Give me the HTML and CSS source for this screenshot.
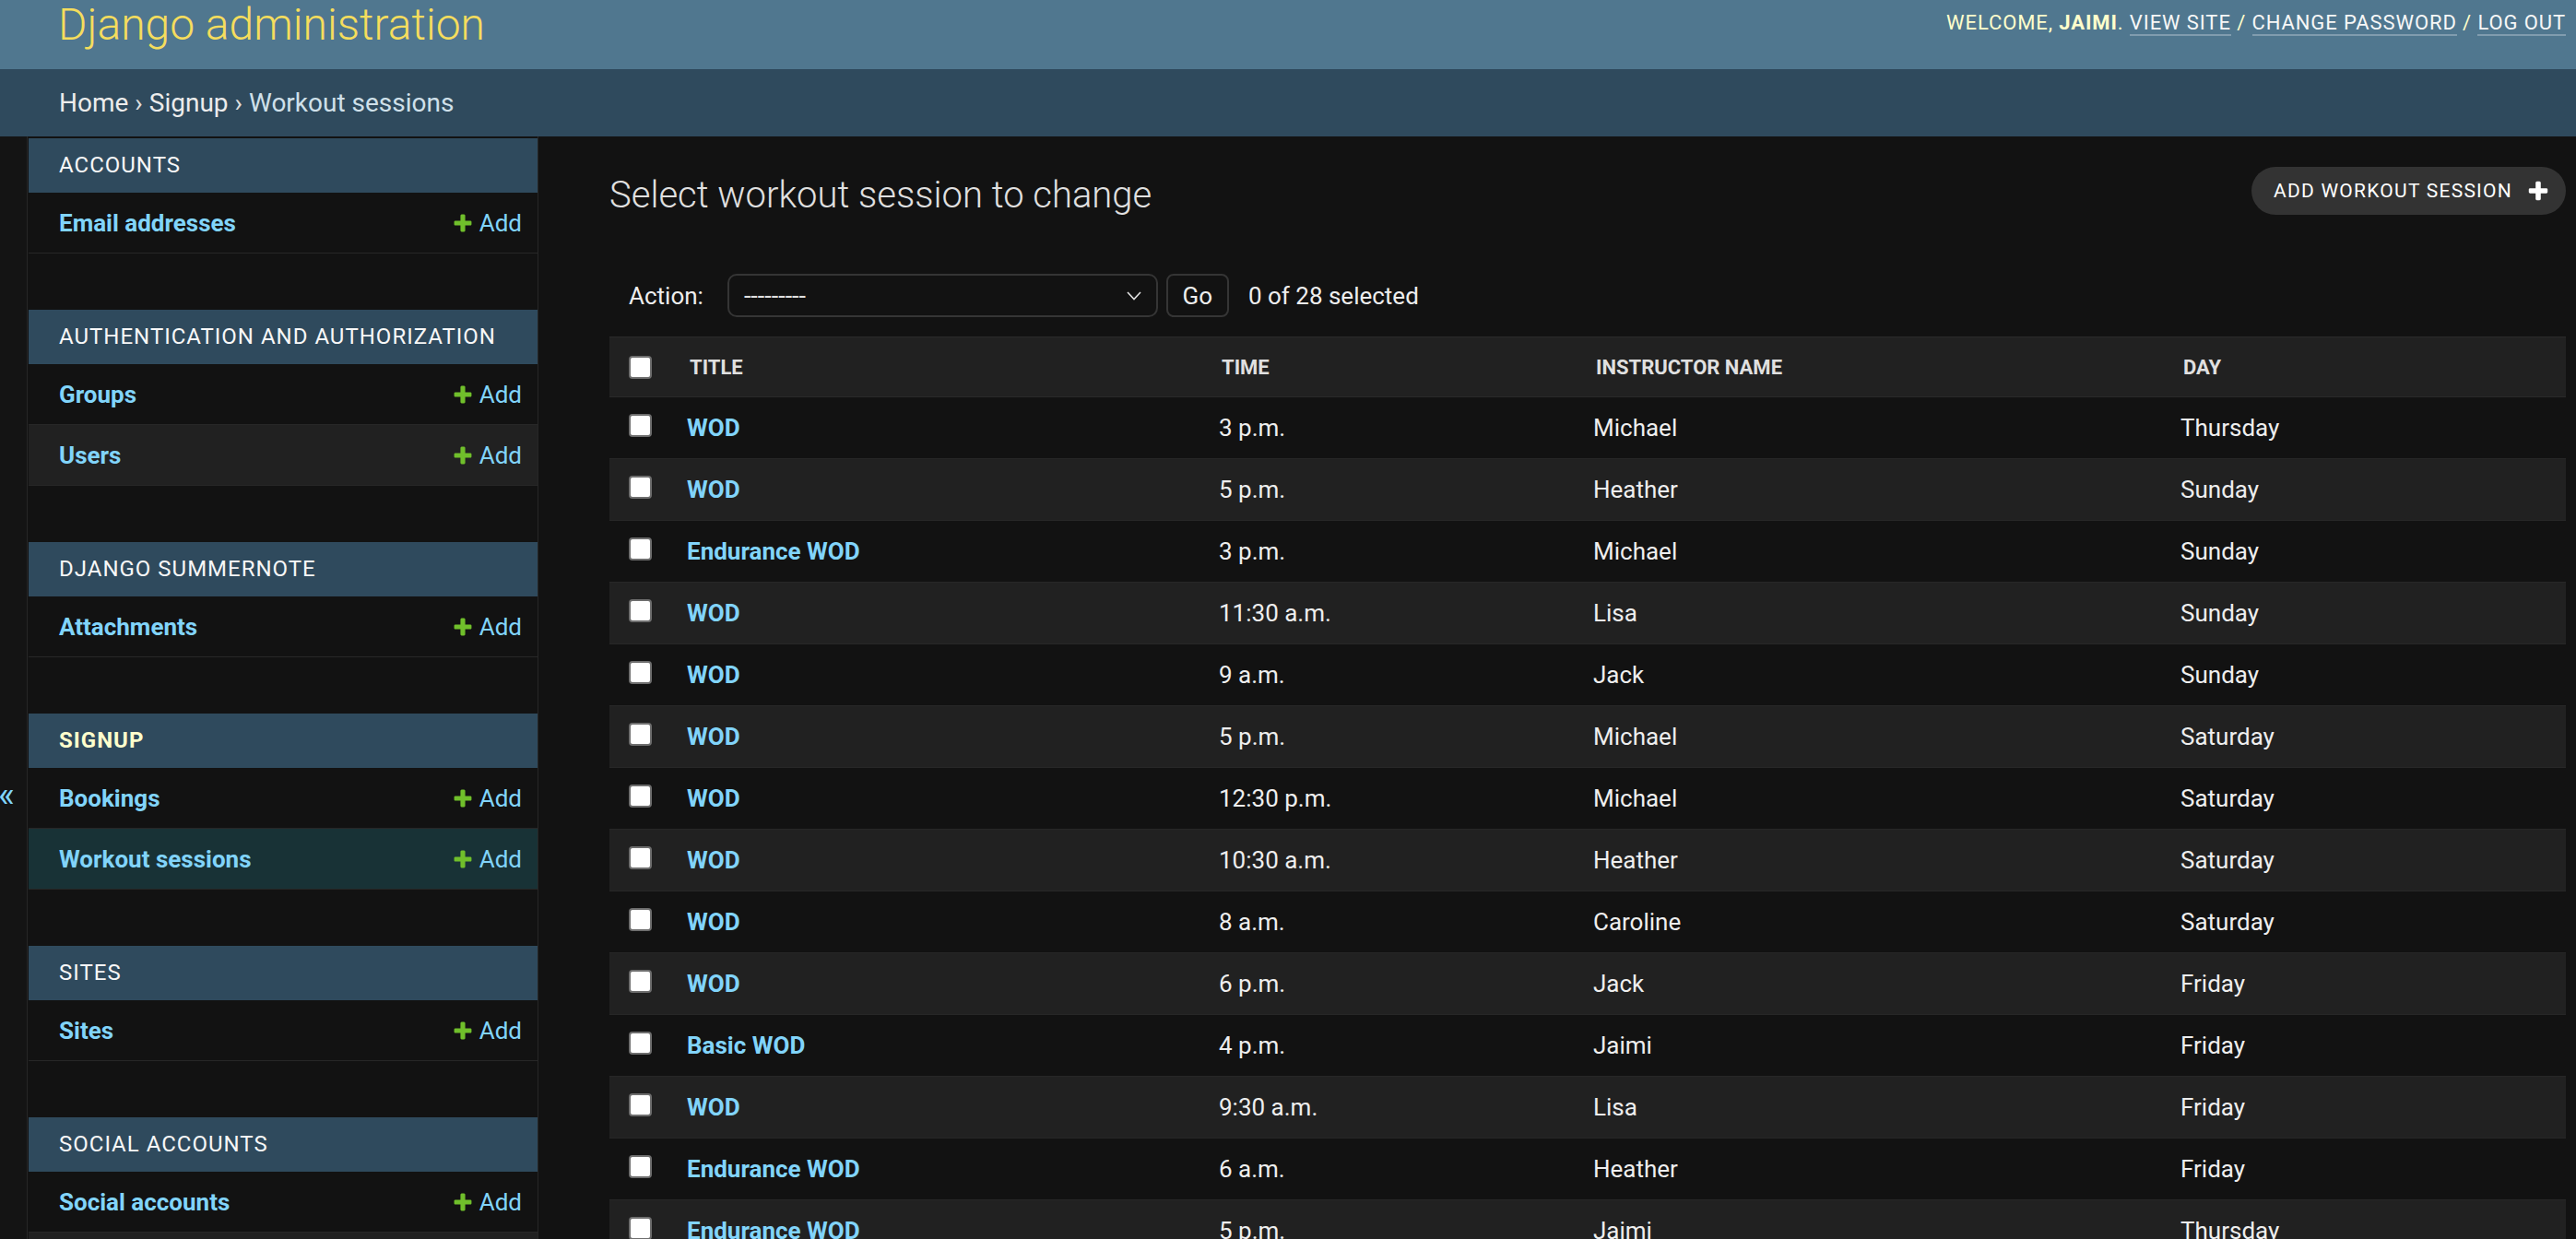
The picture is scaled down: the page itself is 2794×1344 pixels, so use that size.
FILE: index.html
```html
<!DOCTYPE html>
<html lang="en">
<head>
<meta charset="utf-8">
<title>Select workout session to change | Django site admin</title>
<link rel="stylesheet" href="styles.css">
</head>
<body>
<header class="header">
  <h1 class="branding">Django administration</h1>
  <div class="user-tools">Welcome, <strong>Jaimi</strong>. <a href="#">View site</a> / <a href="#">Change password</a> / <a href="#">Log out</a></div>
</header>
<nav class="breadcrumbs"><a href="#">Home</a><span class="sep">›</span><a href="#">Signup</a><span class="sep">›</span>Workout sessions</nav>
<div class="main">
  <div class="toggle"><span class="toggle-glyph">«</span></div>
  <aside class="sidebar">
    <section class="module">
      <div class="caption">Accounts</div>
      <div class="row"><a class="model" href="#">Email addresses</a><a class="addlink" href="#"><svg viewBox="0 0 1792 1792" width="24" height="24"><path fill="#70bf2b" d="M1600 796v192q0 40-28 68t-68 28h-416v416q0 40-28 68t-68 28h-192q-40 0-68-28t-28-68v-416h-416q-40 0-68-28t-28-68v-192q0-40 28-68t68-28h416v-416q0-40 28-68t68-28h192q40 0 68 28t28 68v416h416q40 0 68 28t28 68z"/></svg>Add</a></div>
    </section>
    <section class="module">
      <div class="caption">Authentication and Authorization</div>
      <div class="row"><a class="model" href="#">Groups</a><a class="addlink" href="#"><svg viewBox="0 0 1792 1792" width="24" height="24"><path fill="#70bf2b" d="M1600 796v192q0 40-28 68t-68 28h-416v416q0 40-28 68t-68 28h-192q-40 0-68-28t-28-68v-416h-416q-40 0-68-28t-28-68v-192q0-40 28-68t68-28h416v-416q0-40 28-68t68-28h192q40 0 68 28t28 68v416h416q40 0 68 28t28 68z"/></svg>Add</a></div>
      <div class="row alt"><a class="model" href="#">Users</a><a class="addlink" href="#"><svg viewBox="0 0 1792 1792" width="24" height="24"><path fill="#70bf2b" d="M1600 796v192q0 40-28 68t-68 28h-416v416q0 40-28 68t-68 28h-192q-40 0-68-28t-28-68v-416h-416q-40 0-68-28t-28-68v-192q0-40 28-68t68-28h416v-416q0-40 28-68t68-28h192q40 0 68 28t28 68v416h416q40 0 68 28t28 68z"/></svg>Add</a></div>
    </section>
    <section class="module">
      <div class="caption">Django Summernote</div>
      <div class="row"><a class="model" href="#">Attachments</a><a class="addlink" href="#"><svg viewBox="0 0 1792 1792" width="24" height="24"><path fill="#70bf2b" d="M1600 796v192q0 40-28 68t-68 28h-416v416q0 40-28 68t-68 28h-192q-40 0-68-28t-28-68v-416h-416q-40 0-68-28t-28-68v-192q0-40 28-68t68-28h416v-416q0-40 28-68t68-28h192q40 0 68 28t28 68v416h416q40 0 68 28t28 68z"/></svg>Add</a></div>
    </section>
    <section class="module">
      <div class="caption current">Signup</div>
      <div class="row"><a class="model" href="#">Bookings</a><a class="addlink" href="#"><svg viewBox="0 0 1792 1792" width="24" height="24"><path fill="#70bf2b" d="M1600 796v192q0 40-28 68t-68 28h-416v416q0 40-28 68t-68 28h-192q-40 0-68-28t-28-68v-416h-416q-40 0-68-28t-28-68v-192q0-40 28-68t68-28h416v-416q0-40 28-68t68-28h192q40 0 68 28t28 68v416h416q40 0 68 28t28 68z"/></svg>Add</a></div>
      <div class="row selected"><a class="model" href="#">Workout sessions</a><a class="addlink" href="#"><svg viewBox="0 0 1792 1792" width="24" height="24"><path fill="#70bf2b" d="M1600 796v192q0 40-28 68t-68 28h-416v416q0 40-28 68t-68 28h-192q-40 0-68-28t-28-68v-416h-416q-40 0-68-28t-28-68v-192q0-40 28-68t68-28h416v-416q0-40 28-68t68-28h192q40 0 68 28t28 68v416h416q40 0 68 28t28 68z"/></svg>Add</a></div>
    </section>
    <section class="module">
      <div class="caption">Sites</div>
      <div class="row"><a class="model" href="#">Sites</a><a class="addlink" href="#"><svg viewBox="0 0 1792 1792" width="24" height="24"><path fill="#70bf2b" d="M1600 796v192q0 40-28 68t-68 28h-416v416q0 40-28 68t-68 28h-192q-40 0-68-28t-28-68v-416h-416q-40 0-68-28t-28-68v-192q0-40 28-68t68-28h416v-416q0-40 28-68t68-28h192q40 0 68 28t28 68v416h416q40 0 68 28t28 68z"/></svg>Add</a></div>
    </section>
    <section class="module">
      <div class="caption">Social Accounts</div>
      <div class="row"><a class="model" href="#">Social accounts</a><a class="addlink" href="#"><svg viewBox="0 0 1792 1792" width="24" height="24"><path fill="#70bf2b" d="M1600 796v192q0 40-28 68t-68 28h-416v416q0 40-28 68t-68 28h-192q-40 0-68-28t-28-68v-416h-416q-40 0-68-28t-28-68v-192q0-40 28-68t68-28h416v-416q0-40 28-68t68-28h192q40 0 68 28t28 68v416h416q40 0 68 28t28 68z"/></svg>Add</a></div>
      <div class="row alt"><a class="model" href="#">Social application tokens</a><a class="addlink" href="#"><svg viewBox="0 0 1792 1792" width="24" height="24"><path fill="#70bf2b" d="M1600 796v192q0 40-28 68t-68 28h-416v416q0 40-28 68t-68 28h-192q-40 0-68-28t-28-68v-416h-416q-40 0-68-28t-28-68v-192q0-40 28-68t68-28h416v-416q0-40 28-68t68-28h192q40 0 68 28t28 68v416h416q40 0 68 28t28 68z"/></svg>Add</a></div>
    </section>
  </aside>
  <main class="content">
    <div class="content-head">
      <h1 class="title">Select workout session to change</h1>
      <a class="addbtn" href="#">Add workout session<svg viewBox="0 0 1792 1792" width="26" height="26"><path fill="#ffffff" d="M1600 796v192q0 40-28 68t-68 28h-416v416q0 40-28 68t-68 28h-192q-40 0-68-28t-28-68v-416h-416q-40 0-68-28t-28-68v-192q0-40 28-68t68-28h416v-416q0-40 28-68t68-28h192q40 0 68 28t28 68v416h416q40 0 68 28t28 68z"/></svg></a>
    </div>
    <div class="actions">
      <span class="action-label">Action:</span>
      <div class="select"><span>---------</span><svg width="16" height="10" viewBox="0 0 16 10"><polyline points="1,1 8,8.5 15,1" fill="none" stroke="#e0e0e0" stroke-width="1.6"/></svg></div>
      <div class="go">Go</div>
      <span class="counter">0 of 28 selected</span>
    </div>
    <table class="results">
      <colgroup><col class="c-check"><col class="c-title"><col class="c-time"><col class="c-inst"><col class="c-day"></colgroup>
      <thead>
        <tr><th class="check"><span class="cb"></span></th><th>Title</th><th>Time</th><th>Instructor name</th><th>Day</th></tr>
      </thead>
      <tbody>
        <tr><td class="check"><span class="cb"></span></td><td><a href="#">WOD</a></td><td>3 p.m.</td><td>Michael</td><td>Thursday</td></tr>
        <tr><td class="check"><span class="cb"></span></td><td><a href="#">WOD</a></td><td>5 p.m.</td><td>Heather</td><td>Sunday</td></tr>
        <tr><td class="check"><span class="cb"></span></td><td><a href="#">Endurance WOD</a></td><td>3 p.m.</td><td>Michael</td><td>Sunday</td></tr>
        <tr><td class="check"><span class="cb"></span></td><td><a href="#">WOD</a></td><td>11:30 a.m.</td><td>Lisa</td><td>Sunday</td></tr>
        <tr><td class="check"><span class="cb"></span></td><td><a href="#">WOD</a></td><td>9 a.m.</td><td>Jack</td><td>Sunday</td></tr>
        <tr><td class="check"><span class="cb"></span></td><td><a href="#">WOD</a></td><td>5 p.m.</td><td>Michael</td><td>Saturday</td></tr>
        <tr><td class="check"><span class="cb"></span></td><td><a href="#">WOD</a></td><td>12:30 p.m.</td><td>Michael</td><td>Saturday</td></tr>
        <tr><td class="check"><span class="cb"></span></td><td><a href="#">WOD</a></td><td>10:30 a.m.</td><td>Heather</td><td>Saturday</td></tr>
        <tr><td class="check"><span class="cb"></span></td><td><a href="#">WOD</a></td><td>8 a.m.</td><td>Caroline</td><td>Saturday</td></tr>
        <tr><td class="check"><span class="cb"></span></td><td><a href="#">WOD</a></td><td>6 p.m.</td><td>Jack</td><td>Friday</td></tr>
        <tr><td class="check"><span class="cb"></span></td><td><a href="#">Basic WOD</a></td><td>4 p.m.</td><td>Jaimi</td><td>Friday</td></tr>
        <tr><td class="check"><span class="cb"></span></td><td><a href="#">WOD</a></td><td>9:30 a.m.</td><td>Lisa</td><td>Friday</td></tr>
        <tr><td class="check"><span class="cb"></span></td><td><a href="#">Endurance WOD</a></td><td>6 a.m.</td><td>Heather</td><td>Friday</td></tr>
        <tr><td class="check"><span class="cb"></span></td><td><a href="#">Endurance WOD</a></td><td>5 p.m.</td><td>Jaimi</td><td>Thursday</td></tr>
        <tr><td class="check"><span class="cb"></span></td><td><a href="#">WOD</a></td><td>7 a.m.</td><td>Lisa</td><td>Thursday</td></tr>
      </tbody>
    </table>
  </main>
</div>
</body>
</html>
```
FILE: styles.css
```css
* { box-sizing: border-box; }
html, body { margin: 0; }
body {
  background: #121212;
  color: #eeeeee;
  font-family: Roboto, "Liberation Sans", Arial, sans-serif;
}
a { text-decoration: none; color: #81d4fa; }

.header {
  height: 75px;
  background: #50778f;
  display: flex;
  justify-content: space-between;
  align-items: flex-start;
  padding: 0 11px 0 63px;
}
.branding {
  margin: 0;
  font-size: 48px;
  font-weight: 300;
  line-height: 54px;
  color: #f5dd5d;
}
.user-tools {
  padding-top: 12px;
  font-size: 22px;
  line-height: 26px;
  letter-spacing: 0.9px;
  text-transform: uppercase;
  color: #ffffcc;
}
.user-tools strong { font-weight: 700; }
.user-tools a {
  color: #f7f7f7;
  border-bottom: 2px solid rgba(255, 255, 255, 0.28);
}

.breadcrumbs {
  height: 73px;
  background: #2f4a5d;
  display: flex;
  align-items: center;
  padding: 0 64px;
  font-size: 28px;
  color: #cfe0ea;
}
.breadcrumbs a { color: #ececec; }
.breadcrumbs .sep { margin: 0 7px; color: #e0e0e0; }

.main {
  display: flex;
  min-height: calc(100vh - 148px);
}
.toggle {
  flex: none;
  width: 30px;
  border-right: 1px solid #272727;
  background: #141414;
  padding-top: 696px;
}
.toggle-glyph {
  display: block;
  font-size: 38px;
  line-height: 36px;
  color: #81d4fa;
  margin-left: -2px;
}
.sidebar {
  flex: none;
  width: 554px;
  padding: 2px 0 0 1px;
  border-right: 1px solid #272727;
}
.module { margin-bottom: 61px; }
.caption {
  height: 59px;
  line-height: 59px;
  background: #2f4a5d;
  padding-left: 33px;
  font-size: 24px;
  letter-spacing: 1px;
  text-transform: uppercase;
  color: #f7f7f7;
}
.caption.current { color: #ffffcc; font-weight: 700; }
.row {
  display: flex;
  justify-content: space-between;
  align-items: center;
  height: 66px;
  padding: 0 17px 0 33px;
  border-bottom: 1px solid #272727;
}
.row.alt { background: #212121; }
.row.selected { background: #183236; }
.model { font-size: 26px; font-weight: 700; }
.addlink {
  display: flex;
  align-items: center;
  gap: 6px;
  font-size: 26px;
}

.content {
  flex: 1;
  min-width: 0;
  padding: 0 11px 0 77px;
}
.content-head {
  display: flex;
  justify-content: space-between;
  align-items: flex-start;
  padding-top: 33px;
}
.title {
  margin: 7px 0 0;
  font-size: 40px;
  line-height: 47px;
  font-weight: 300;
  color: #e0e0e0;
}
.addbtn {
  display: flex;
  align-items: center;
  gap: 15px;
  height: 52px;
  padding: 0 17px 0 24px;
  border-radius: 26px;
  background: #333333;
  color: #ffffff;
  font-size: 21px;
  letter-spacing: 1.25px;
  text-transform: uppercase;
}

.actions {
  display: flex;
  align-items: center;
  height: 47px;
  margin-top: 62px;
  padding-left: 21px;
  font-size: 26px;
  color: #eeeeee;
}
.select {
  display: flex;
  align-items: center;
  justify-content: space-between;
  width: 467px;
  height: 47px;
  margin-left: 26px;
  padding: 0 16px 0 16px;
  border: 2px solid #353535;
  border-radius: 10px;
  font-size: 27px;
  color: #e0e0e0;
}
.go {
  display: flex;
  align-items: center;
  justify-content: center;
  width: 68px;
  height: 47px;
  margin-left: 9px;
  border: 2px solid #353535;
  border-radius: 8px;
}
.counter { margin-left: 21px; }

.results {
  width: 100%;
  margin-top: 21px;
  border-collapse: collapse;
  table-layout: fixed;
}
.c-check { width: 74px; }
.c-title { width: 577px; }
.c-time { width: 406px; }
.c-inst { width: 637px; }
.c-day { width: 428px; }
.results th {
  height: 65px;
  padding: 0 0 0 13px;
  text-align: left;
  font-size: 22px;
  font-weight: 700;
  text-transform: uppercase;
  color: #e0e0e0;
  background: #212121;
  border-top: 1px solid #2a2a2a;
  border-bottom: 1px solid #2a2a2a;
  white-space: nowrap;
}
.results td {
  height: 67px;
  padding: 0 0 0 10px;
  font-size: 26px;
  color: #eeeeee;
  border-bottom: 1px solid #272727;
  vertical-align: middle;
  white-space: nowrap;
}
.results tbody tr:nth-child(even) td { background: #212121; }
.results td a { font-weight: 700; }
.results th.check { padding-left: 21px; }
.results td.check { padding: 18px 0 0 21px; vertical-align: top; }
.cb {
  display: block;
  width: 25px;
  height: 25px;
  background: #ffffff;
  border: 2px solid #6e6e6e;
  border-radius: 4px;
}
```
